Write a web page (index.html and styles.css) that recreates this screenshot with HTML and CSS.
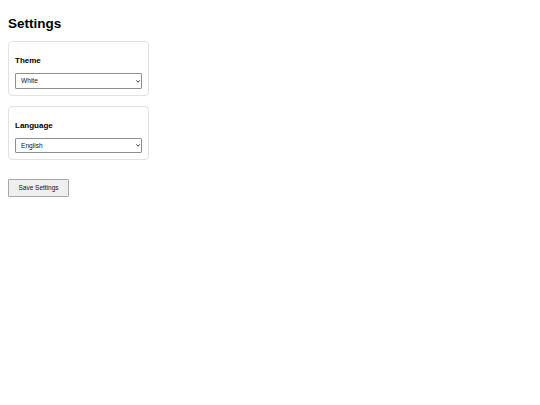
FILE: index.html
```html
<!DOCTYPE html>
<html lang="en">
<head>
<meta charset="utf-8">
<title>Settings</title>
<link rel="stylesheet" href="styles.css">
</head>
<body>
<h1 class="title">Settings</h1>
<div class="card">
  <label class="label" for="theme">Theme</label>
  <div class="select-wrap">
    <select id="theme" class="select">
      <option>White</option>
      <option>Dark</option>
    </select>
    <svg class="chev" width="4" height="3" viewBox="0 0 4 3"><path d="M0.4 0.4 L2 2.2 L3.6 0.4" fill="none" stroke="#222" stroke-width="0.9"/></svg>
  </div>
</div>
<div class="card">
  <label class="label" for="lang">Language</label>
  <div class="select-wrap">
    <select id="lang" class="select">
      <option>English</option>
      <option>Español</option>
    </select>
    <svg class="chev" width="4" height="3" viewBox="0 0 4 3"><path d="M0.4 0.4 L2 2.2 L3.6 0.4" fill="none" stroke="#222" stroke-width="0.9"/></svg>
  </div>
</div>
<button class="save">Save Settings</button>
</body>
</html>
```
FILE: styles.css
```css
body {
  margin: 8px;
  background: #fff;
  font-family: "Liberation Sans", Arial, sans-serif;
  color: #000;
}
.title {
  margin: 8px 0 10px;
  font-size: 13.5px;
  line-height: 15px;
  font-weight: bold;
}
.card {
  box-sizing: border-box;
  width: 141px;
  border: 1px solid #e2e2e2;
  border-radius: 4px;
  padding: 14px 6px 6px;
  margin-bottom: 10px;
}
.label {
  display: block;
  font-size: 8px;
  line-height: 9px;
  font-weight: bold;
  margin-bottom: 8px;
}
.select-wrap {
  position: relative;
  width: 127px;
}
.select {
  -webkit-appearance: none;
  appearance: none;
  display: block;
  box-sizing: border-box;
  width: 127px;
  height: 15.5px;
  font-family: "Liberation Sans", Arial, sans-serif;
  font-size: 6.6px;
  line-height: 13px;
  border: 1px solid #8f8f8f;
  border-radius: 1px;
  background: #fff;
  color: #111;
  padding: 0 3px 0 5px;
  margin: 0;
}
.chev {
  position: absolute;
  right: 2px;
  top: 6.5px;
  display: block;
}
.save {
  box-sizing: border-box;
  display: block;
  margin-top: 18.5px;
  width: 61px;
  height: 18px;
  font-family: "Liberation Sans", Arial, sans-serif;
  font-size: 6.5px;
  color: #111;
  background: #efefef;
  border: 1px solid #a8a8a8;
  border-radius: 1px;
  padding: 0;
}
```
